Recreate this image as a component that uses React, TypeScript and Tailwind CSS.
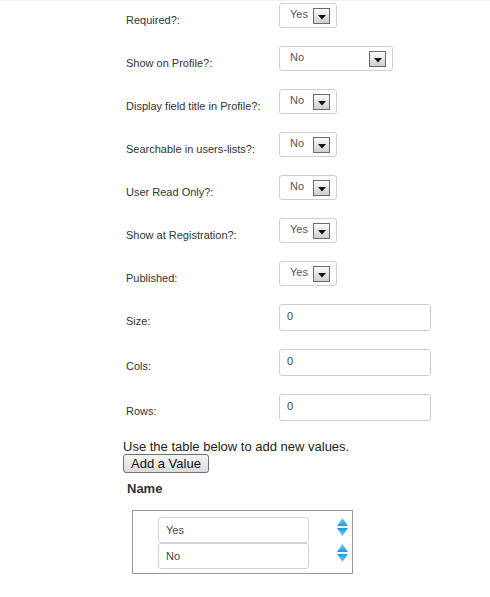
const FONT = { fontFamily: '"Liberation Sans", Arial, sans-serif' };

const selectRows = [
  { label: 'Required?:', value: 'Yes' },
  { label: 'Show on Profile?:', value: 'No', wide: true },
  { label: 'Display field title in Profile?:', value: 'No' },
  { label: 'Searchable in users-lists?:', value: 'No' },
  { label: 'User Read Only?:', value: 'No' },
  { label: 'Show at Registration?:', value: 'Yes' },
  { label: 'Published:', value: 'Yes' },
];

const textRows = ['Size:', 'Cols:', 'Rows:'];

function ArrowBox() {
  return (
    <span className="flex h-[16px] w-[17px] items-center justify-center border border-[#6b6b6b] bg-gradient-to-b from-[#fbfbfb] to-[#cfcfcf]">
      <svg width="8" height="5" viewBox="0 0 8 5" className="mt-[3px]">
        <path d="M0 0 L8 0 L4 4.5 Z" fill="#111" />
      </svg>
    </span>
  );
}

function FakeSelect({ value, wide }: { value: string; wide?: boolean }) {
  return (
    <div
      className={`flex h-[25px] items-center justify-between rounded-[3px] border border-[#cfcfcf] bg-white pl-[10px] pr-[6px] text-[11px] text-[#555] ${
        wide ? 'w-[114px]' : 'w-[58px]'
      }`}
    >
      <span className="-mt-[3px] leading-[13px]">{value}</span>
      <ArrowBox />
    </div>
  );
}

function Spinner() {
  return (
    <svg width="11" height="18" viewBox="0 0 11 18">
      <defs>
        <linearGradient id="spinUp" x1="0" y1="0" x2="0" y2="1">
          <stop offset="0" stopColor="#6fd0ff" />
          <stop offset="1" stopColor="#1e96f0" />
        </linearGradient>
        <linearGradient id="spinDown" x1="0" y1="0" x2="0" y2="1">
          <stop offset="0" stopColor="#1e96f0" />
          <stop offset="1" stopColor="#6fd0ff" />
        </linearGradient>
      </defs>
      <path d="M0 8 L5.5 0 L11 8 Z" fill="url(#spinUp)" />
      <path d="M0 10 L11 10 L5.5 18 Z" fill="url(#spinDown)" />
    </svg>
  );
}

export default function App() {
  return (
    <div className="min-h-[597px] w-[490px] border-t border-[#f2f2f2] bg-white text-[#333]" style={FONT}>
      <div className="pl-[123px] pt-[2px]">
        {selectRows.map((row) => (
          <div key={row.label} className="mb-[18px] flex items-center">
            <div className="w-[156px] pl-[3px] pt-[9px] text-[11px] leading-[13px] text-[#333]">{row.label}</div>
            <FakeSelect value={row.value} wide={row.wide} />
          </div>
        ))}

        <div>
          {textRows.map((label) => (
            <div key={label} className="mb-[18px] flex items-center">
              <div className="w-[156px] pl-[3px] pt-[8px] text-[11px] leading-[13px] text-[#333]">{label}</div>
              <input
                readOnly
                defaultValue="0"
                className="h-[27px] w-[152px] rounded-[3px] border border-[#cfcfcf] bg-white pb-[4px] pl-[7px] text-[11px] text-[#444] outline-none"
                style={FONT}
              />
            </div>
          ))}
        </div>

        <p className="text-[13px] leading-[15px] text-[#222]">Use the table below to add new values.</p>
        <button
          className="flex h-[19px] items-center rounded-[3px] border border-[#707070] bg-gradient-to-b from-[#f4f4f4] to-[#dcdcdc] px-[7px] text-[13px] leading-[15px] text-[#111]"
          style={FONT}
        >
          Add a Value
        </button>
        <div className="ml-[4px] mt-[8px] text-[13px] font-bold leading-[15px] text-[#333]">Name</div>

        <div className="ml-[9px] mt-[14px] w-[221px] border border-[#9a9a9a] pb-[4px] pt-[6px]">
          {['Yes', 'No'].map((v) => (
            <div key={v} className="flex items-start pl-[25px]">
              <div className="flex h-[26px] w-[151px] items-center rounded-[3px] border border-[#d4d4d4] bg-white pl-[7px] text-[11px] text-[#444]">
                {v}
              </div>
              <div className="ml-[28px] mt-[1px]">
                <Spinner />
              </div>
            </div>
          ))}
        </div>
      </div>
    </div>
  );
}
